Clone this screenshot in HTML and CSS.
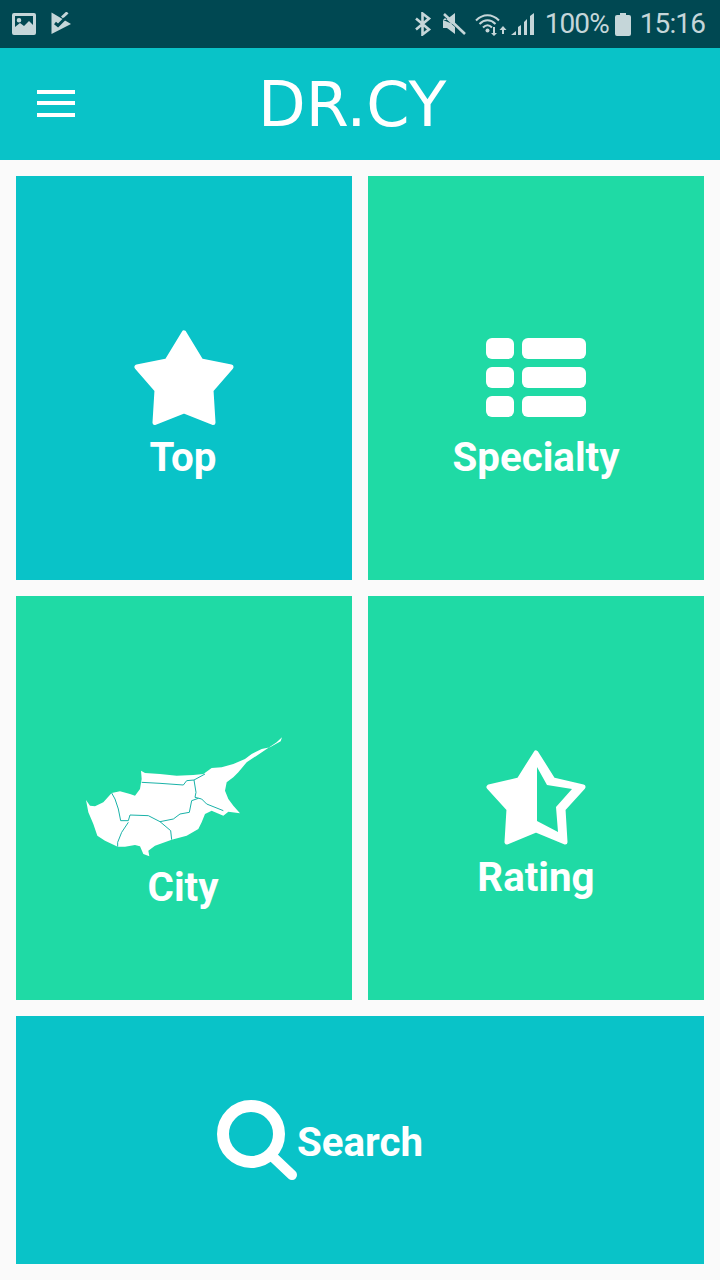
FILE: index.html
```html
<!DOCTYPE html>
<html lang="en">
<head>
<meta charset="utf-8">
<title>DR.CY</title>
<link rel="stylesheet" href="styles.css">
</head>
<body>
<div class="status">
  <svg class="si" width="24" height="24" viewBox="0 0 24 24"><path fill-rule="evenodd" d="M2 1h20a2 2 0 0 1 2 2v18a2 2 0 0 1-2 2H2a2 2 0 0 1-2-2V3a2 2 0 0 1 2-2zM3 4v11l5-4 4 3 5-5 4 4V4zM7 6a2.3 2.3 0 1 1 0 4.6A2.3 2.3 0 0 1 7 6z"/></svg>
  <svg class="si check" width="22" height="24" viewBox="0 0 22 24"><path d="M0.500 0.500L20 12 0.500 22z"/><path fill="none" stroke="#c5d6d9" stroke-width="3" d="M11 5.500L16.500 0.500"/><path fill="none" stroke="#004852" stroke-width="3" d="M4 11l3 2.500L14 6.500"/></svg>
  <div class="spacer"></div>
  <svg class="si bt" width="18" height="24" viewBox="0 0 18 24"><path fill="none" stroke="#c5d6d9" stroke-width="2.600" d="M2 6.500l13 11-6.500 5V1.500l6.500 5-13 11"/></svg>
  <svg class="si mute" width="24" height="24" viewBox="0 0 24 24"><path d="M1 8h3l9-7v12zM1 8v8h4l8 6v-7L3 6z"/><path fill="none" stroke="#c5d6d9" stroke-width="2.600" d="M2 2l21 20"/></svg>
  <svg class="si wifi" width="34" height="24" viewBox="0 0 34 24"><g fill="none" stroke="#c5d6d9" stroke-width="2"><path d="M1 8.500c7-7 16-7 23 0"/><path d="M4.500 12c5-5 11-5 16 0"/><path d="M8 15.500c3-3 6-3 9 0"/></g><circle cx="12.500" cy="18.500" r="2"/><path d="M18 15h2v6h2l-3 3-3-3h2zM28 14l3.500 4h-2.500v4h-2v-4h-2.500z"/></svg>
  <svg class="si signal" width="24" height="24" viewBox="0 0 24 24"><path d="M0 23l5-4v4zM7 23v-8l3-2v10zM13 23V10l3-3v16zM19 23V4l4-3v22z"/></svg>
  <span class="stext pct">100%</span>
  <svg class="si batt" width="16" height="24" viewBox="0 0 16 24"><path d="M5 1h6v2h3a2 2 0 0 1 2 2v17a2 2 0 0 1-2 2H2a2 2 0 0 1-2-2V5a2 2 0 0 1 2-2h3z"/></svg>
  <span class="stext time">15:16</span>
</div>
<header class="appbar">
  <div class="burger"><span></span><span></span><span></span></div>
  <h1 class="title">DR.CY</h1>
</header>
<main class="grid">
  <a class="tile teal lifted">
    <svg class="icon" width="100" height="100" viewBox="0 0 100 100"><path fill="#fff" stroke="#fff" stroke-width="5" stroke-linejoin="round" d="M50 3L67 31 97 37 77 60 79 92.500 50 81 21 92.500 23 60 3 37 33 31z"/></svg>
    <span class="label nudge">Top</span>
  </a>
  <a class="tile green lifted">
    <svg class="icon" width="100" height="100" viewBox="0 0 100 100"><g fill="#fff"><rect x="0" y="8" width="28" height="21" rx="6"/><rect x="36" y="8" width="64" height="21" rx="6"/><rect x="0" y="37" width="28" height="21" rx="6"/><rect x="36" y="37" width="64" height="21" rx="6"/><rect x="0" y="66" width="28" height="21" rx="6"/><rect x="36" y="66" width="64" height="21" rx="6"/></g></svg>
    <span class="label">Specialty</span>
  </a>
  <a class="tile green mapped">
    <svg class="map" width="230" height="140" viewBox="0 0 690 420"><path fill="#fff" d="M636 40L632 52 600 70 575 75 545 90 525 105 490 120 455 130 425 132 400 150 370 153 320 155 270 150 225 147 213 140 215 165 210 195 195 215 180 210 150 202 125 207 100 235 75 247 60 245 48 228 55 265 70 300 82 335 105 350 143 368 165 368 195 363 210 367 220 390 238 397 235 380 255 365 305 347 350 335 385 315 395 295 405 270 425 260 460 275 475 263 510 268 490 245 475 225 465 200 470 175 490 160 505 145 530 115 560 95 590 75 620 55z"/><g fill="none" stroke="#1ab2a8" stroke-width="3"><path d="M215 175L270 178 340 183 350 170 372 168 405 150"/><path d="M372 168L378 205 375 220 395 225 410 240 460 260"/><path d="M385 223L365 230 358 265 330 270 310 285 270 293 235 275 180 273 175 290 152 290 145 255 135 225 125 207"/><path d="M175 295L155 325 143 355V368"/><path d="M270 293L302 320 305 347"/></g></svg>
    <span class="label nudge">City</span>
  </a>
  <a class="tile green lifted">
    <svg class="icon" width="100" height="100" viewBox="0 0 100 100"><path fill="#fff" stroke="#fff" stroke-width="5" stroke-linejoin="round" d="M50 3L67 30 97 37 77 59 79 92 50 80 21 92 23 59 3 37 33 30z"/><path fill="#1fdaa5" d="M51 17L61 35 86 39 70 57 72 82 51 71z"/></svg>
    <span class="label">Rating</span>
  </a>
  <a class="tile teal wide">
    <svg class="sicon" width="80" height="80" viewBox="0 0 80 80"><g fill="none" stroke="#fff" stroke-linecap="round"><circle cx="34" cy="34" r="28" stroke-width="12"/><path stroke-width="10" d="M56 57l19 18"/></g></svg>
    <span class="label lowered">Search</span>
  </a>
</main>
</body>
</html>
```
FILE: styles.css
```css
* { box-sizing: border-box; }
html, body { margin: 0; padding: 0; }
body {
  width: 720px;
  height: 1280px;
  background: #fafafa;
  font-family: Roboto, "Liberation Sans", sans-serif;
  overflow: hidden;
}
.status {
  height: 48px;
  background: #004852;
  display: flex;
  align-items: center;
  padding: 0 15px 0 12px;
  color: #c5d6d9;
}
.si { fill: #c5d6d9; flex: none; display: block; }
.check { margin-left: 15px; }
.spacer { flex: 1; }
.bt { margin-right: 10px; }
.mute { margin-right: 9px; }
.wifi { margin-right: 2px; }
.signal { margin-right: 10px; }
.stext {
  font-size: 28px;
  line-height: 48px;
  letter-spacing: -0.9px;
  white-space: nowrap;
}
.batt { margin: 0 9px 0 6px; }
.appbar {
  height: 112px;
  background: #09c3c8;
  display: flex;
  align-items: center;
  padding-left: 37px;
  color: #fff;
}
.burger {
  width: 38px;
  display: flex;
  flex-direction: column;
  gap: 7.500px;
  margin-top: -2px;
}
.burger span { display: block; height: 4px; background: #fff; }
.title {
  margin: 2px 0 0 183px;
  font-family: "DejaVu Sans", sans-serif;
  font-weight: 400;
  font-size: 62px;
  line-height: 112px;
}
.grid {
  display: grid;
  grid-template-columns: 336px 336px;
  grid-template-rows: 404px 404px 248px;
  gap: 16px;
  padding: 16px;
}
.tile {
  display: flex;
  flex-direction: column;
  align-items: center;
  justify-content: center;
  color: #fff;
}
.teal { background: #09c3c8; }
.green { background: #1fdaa5; }
.lifted { padding-top: 53px; }
.lifted .label { margin-top: 6px; }
.mapped { padding-top: 38px; }
.mapped .label { margin-top: 2px; }
.map { margin-left: 2px; }
.wide {
  grid-column: 1 / span 2;
  flex-direction: row;
  padding-right: 80px;
}
.icon, .map, .sicon { display: block; flex: none; }
.label {
  font-weight: 700;
  font-size: 40.300px;
  line-height: 44px;
}
.nudge { margin-right: 2px; }
.lowered { margin-top: 6px; }
```
